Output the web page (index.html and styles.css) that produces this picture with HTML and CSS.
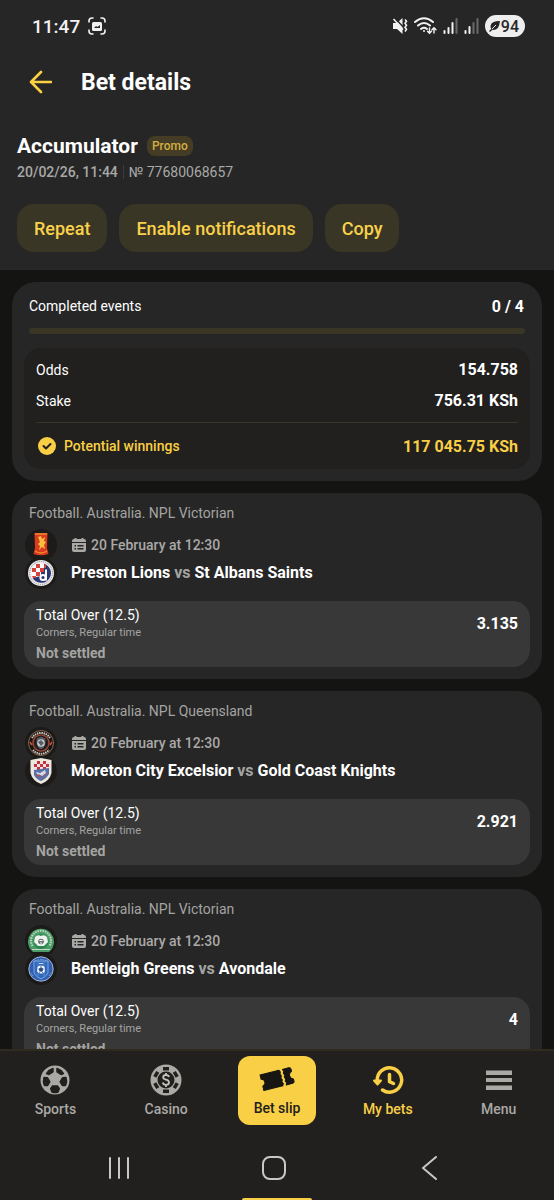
FILE: index.html
```html
<!DOCTYPE html>
<html lang="en">
<head>
<meta charset="utf-8">
<meta name="viewport" content="width=device-width, initial-scale=1">
<title>Bet details</title>
<link rel="stylesheet" href="styles.css">
</head>
<body>
<svg class="defs" aria-hidden="true">
  <symbol id="calendar" viewBox="0 0 14 14">
    <path fill="currentColor" fill-rule="evenodd" d="M2.500 0h2v1h5V0h2v1h.5q2 0 2 2v1H0V3q0-2 2-2h.5zM0 5h14v7q0 2-2 2H2q-2 0-2-2zm2.500 2v1.500H4V7zM5.500 7v1.500h6V7zm-3 3v1.500H4V10zm3 0v1.500h6V10z"/>
  </symbol>
</svg>
<div class="app">
  <header class="header">
    <div class="status">
      <div class="status-left">
        <span class="clock">11:47</span>
        <svg width="18" height="18" viewBox="0 0 18 18" fill="none" stroke="#f2f2f2" stroke-width="1.600" stroke-linecap="round"><path d="M1 5V4q0-3 3-3h1M13 1h1q3 0 3 3v1M17 13v1q0 3-3 3h-1M5 17H4q-3 0-3-3v-1"/><rect x="4" y="5" width="10" height="9" rx="1.500" fill="#f2f2f2" stroke="none"/><path d="M6 11l2-2 1.500 1L12 8v3z" fill="#262626" stroke="none"/></svg>
      </div>
      <div class="status-right">
        <svg width="16" height="18" viewBox="0 0 16 18"><path fill="#f2f2f2" d="M1 6h4l5.500-5v16L5 12H1z"/><path d="M3 1l9 10" stroke="#262626" stroke-width="1.500"/><path d="M1.500 2L11 12.500" stroke="#f2f2f2" stroke-width="1.600"/><path d="M13 2.500l1.500 1.800-1.500 2 1.500 2-1.500 2 1.500 2-1.500 2.200" fill="none" stroke="#f2f2f2" stroke-width="1.600"/></svg>
        <svg width="23" height="18" viewBox="0 0 23 18" fill="none" stroke="#f2f2f2" stroke-width="2" stroke-linecap="round"><path d="M1 5q9-7.500 18 0M4 8.500q6-5 12 0M7 12q3-2.400 6 0"/><circle cx="10" cy="14" r="1" fill="#f2f2f2" stroke="none"/><path stroke-width="1.400" d="M15.500 11v5M13.500 14.300l2 2 2-2M20 16v-5M18 12.700l2-2 2 2"/></svg>
        <svg width="15" height="16" viewBox="0 0 15 16" stroke="#f2f2f2" stroke-width="2" stroke-linecap="round"><path d="M1.500 13v2M5.500 10v5M9.500 5v10"/><path d="M13.500 1v14" stroke="#6a6a6a"/></svg>
        <svg width="15" height="16" viewBox="0 0 15 16" stroke="#f2f2f2" stroke-width="2" stroke-linecap="round"><path d="M1.500 13v2M5.500 9v6"/><path d="M9.500 5v10M13.500 1v14" stroke="#6a6a6a"/></svg>
        <span class="battery"><svg width="11" height="12" viewBox="0 0 11 12"><path d="M11 1Q2 1 1.500 6q0 2 .8 3L0 11l1 1 2.500-2.200Q10 11 11 1z" fill="#262626"/><path d="M3 9l4-4" stroke="#eee"/></svg>94</span>
      </div>
    </div>
    <div class="title-bar">
      <button class="back" aria-label="Back"><svg width="24" height="24" viewBox="0 0 24 24" fill="none" stroke="#f9d142" stroke-width="2.600" stroke-linecap="round" stroke-linejoin="round"><path d="M23 12H3M13 2L3 12l10 10"/></svg></button>
      <h1 class="title">Bet details</h1>
    </div>
    <section class="bet">
      <div class="bet-type"><h2 class="bet-name">Accumulator</h2><span class="promo">Promo</span></div>
      <div class="bet-meta"><b>20/02/26, 11:44</b><span class="bet-number">№ 77680068657</span></div>
      <div class="actions">
        <button class="action">Repeat</button>
        <button class="action">Enable notifications</button>
        <button class="action">Copy</button>
      </div>
    </section>
  </header>

  <main class="content">
    <section class="card summary">
      <div class="completed"><span>Completed events</span><b>0 / 4</b></div>
      <div class="progress"></div>
      <div class="totals">
        <div class="total"><span>Odds</span><b>154.758</b></div>
        <div class="total"><span>Stake</span><b>756.31 KSh</b></div>
        <div class="winnings">
          <span class="winnings-label"><svg width="18" height="18" viewBox="0 0 18 18"><circle cx="9" cy="9" r="9" fill="#f9cf45"/><path d="M5.500 9l2.500 2.500 4.500-4.500" fill="none" stroke="#21201e" stroke-width="2" stroke-linecap="round" stroke-linejoin="round"/></svg>Potential winnings</span>
          <b>117 045.75 KSh</b>
        </div>
      </div>
    </section>

    <article class="card event">
      <p class="league">Football. Australia. NPL Victorian</p>
      <div class="match">
        <div class="crests">
          <span class="crest"><svg width="26" height="26" viewBox="0 0 26 26"><path d="M6.500 1h13l-.5 15 1.500 6q-7.500 2.500-15 0L7 16z" fill="#d93a20"/><path d="M7 2h12M7 19q6 4 12 0" stroke="#ed8b2d" stroke-width="1.500" fill="none"/><path d="M10 5l3-1 1 3 3-2-1 4 2 1-2 3 1 4-3-2-3 3 1-4-2-2 2-2z" fill="#f8bf3c"/></svg></span>
          <span class="crest"><svg width="26" height="26" viewBox="0 0 26 26"><circle cx="13" cy="13" r="13" fill="#ece9e7"/><circle cx="13" cy="13" r="11.500" fill="none" stroke="#8a8a9c" stroke-dasharray="1 1"/><circle cx="13" cy="13" r="9.800" fill="#fff"/><path d="M16 3.700a9.800 9.800 0 1 1-11.500 14L13 16V12h3z" fill="#293773"/><path d="M8 4h4v4H8zM4 8h4v4H4zm8 0h4v4h-4zm-4 4h4v4H8zm-4 4h4v2H5zM16 4.500h2V8h-2z" fill="#d5423c"/><path d="M18 9.500v11" stroke="#fff" stroke-width="2"/><circle cx="15" cy="17.500" r="2.600" fill="none" stroke="#fff" stroke-width="2"/></svg></span>
        </div>
        <div class="match-info">
          <time class="date"><svg width="14" height="14"><use href="#calendar"/></svg>20 February at 12:30</time>
          <h3 class="teams">Preston Lions <span>vs</span> St Albans Saints</h3>
        </div>
      </div>
      <div class="pick">
        <div><p class="market">Total Over (12.5)</p><p class="scope">Corners, Regular time</p><p class="state">Not settled</p></div>
        <b class="odds">3.135</b>
      </div>
    </article>

    <article class="card event">
      <p class="league">Football. Australia. NPL Queensland</p>
      <div class="match">
        <div class="crests">
          <span class="crest"><svg width="26" height="26" viewBox="0 0 26 26"><circle cx="13" cy="13" r="12.500" fill="#171415" stroke="#866852"/><path d="M4 8a10.500 10.500 0 0 1 18 0M5 20a10.500 10.500 0 0 0 16 0" fill="none" stroke="#d0c5bb" stroke-width="2" stroke-dasharray="1.500 .7"/><circle cx="13" cy="13" r="8" fill="#28201f" stroke="#9d4937" stroke-width="1.500"/><path d="M8 8l5-2 5 2v6q-1 5-5 6-4-1-5-6z" fill="#53595c" stroke="#171415"/><circle cx="13" cy="13" r="3.800" fill="#c7cacc"/><path d="M10 12l3-2 3 3-3 3zM15 10l1 2" fill="#555c63"/><path d="M2 12l2 3M24 12l-2 3" stroke="#c75a43" stroke-width="1.500"/></svg></span>
          <span class="crest"><svg width="26" height="26" viewBox="0 0 26 26"><path d="M2.500 2L13 0l10.500 2v13q-2 8-10.500 11Q4.500 23 2.500 15z" fill="#eee8dc"/><path d="M5 4h16v11q-2 6-8 8-6-2-8-8z" fill="#e9e3e6"/><path d="M9 3h3v3H9zm6 0h3v3h-3zM6 6h3v3H6zm6 0h3v3h-3zm6 0h3v3h-3zM9 9h3v3H9zm6 0h3v3h-3z" fill="#c6323b"/><path d="M6 12l7-1 8-1v6q-3 5-8 7-5-2-7-6z" fill="#5870a8"/><path d="M8 14l4 1 5-3 1 3-4 3-5-2z" fill="#d5d5df"/><path d="M8 18l4-1 2 4M16 18l3-3" stroke="#b64e5b" fill="none"/></svg></span>
        </div>
        <div class="match-info">
          <time class="date"><svg width="14" height="14"><use href="#calendar"/></svg>20 February at 12:30</time>
          <h3 class="teams">Moreton City Excelsior <span>vs</span> Gold Coast Knights</h3>
        </div>
      </div>
      <div class="pick">
        <div><p class="market">Total Over (12.5)</p><p class="scope">Corners, Regular time</p><p class="state">Not settled</p></div>
        <b class="odds">2.921</b>
      </div>
    </article>

    <article class="card event">
      <p class="league">Football. Australia. NPL Victorian</p>
      <div class="match">
        <div class="crests">
          <span class="crest"><svg width="26" height="26" viewBox="0 0 26 26"><path d="M5 24a13 13 0 1 1 16 0z" fill="#4b9c66"/><path d="M4.500 18a10 10 0 1 1 17 0" fill="none" stroke="#bad9c2" stroke-width="2" stroke-dasharray="1.500 1"/><circle cx="13" cy="13.500" r="7.500" fill="#2d8550"/><path d="M7 9q3-3 6-1 3-2 6 1l1 5-4 4h-6l-4-4z" fill="#eef2ef"/><circle cx="13" cy="13.500" r="2.800" fill="#66726c"/><path d="M11.500 12.500h3M12 15h2" stroke="#fff"/><path d="M4 21.500h18" stroke="#c0dac7"/></svg></span>
          <span class="crest"><svg width="26" height="26" viewBox="0 0 26 26"><circle cx="13" cy="13" r="12.200" fill="#315eae" stroke="#9fb8df"/><path d="M5 6q8-5 16 0M3 17l2 3M23 17l-2 3" fill="none" stroke="#87a5d4" stroke-dasharray="1.500 1"/><path d="M6 5h14v12q-2 4-7 6-5-2-7-6z" fill="#2e68bf" stroke="#7fa5de"/><path d="M10 6v14M16 6v14" stroke="#5e8dd2"/><circle cx="13" cy="13.500" r="4" fill="#f1f4f8"/><path d="M13 11.500l2 1.500-.8 2.300h-2.400L11 13zM13 9.500v1.500M9.500 13h1M15.500 13h1M11 17l.7-1M15 17l-.7-1" fill="#294a83" stroke="#294a83" stroke-width=".7"/><path d="M11 7.500h4" stroke="#c8d8ef"/></svg></span>
        </div>
        <div class="match-info">
          <time class="date"><svg width="14" height="14"><use href="#calendar"/></svg>20 February at 12:30</time>
          <h3 class="teams">Bentleigh Greens <span>vs</span> Avondale</h3>
        </div>
      </div>
      <div class="pick">
        <div><p class="market">Total Over (12.5)</p><p class="scope">Corners, Regular time</p><p class="state">Not settled</p></div>
        <b class="odds">4</b>
      </div>
    </article>
  </main>

  <nav class="tabs">
    <a class="tab" href="#sports"><svg width="32" height="32" viewBox="0 0 32 32"><circle cx="16" cy="16" r="14.500" fill="#aaa9a6"/><g fill="#21201e" stroke="#21201e" stroke-width="1.500" stroke-linejoin="round"><path d="M14 4.500v3.300L10 10.500l-2.500-1Q9.500 6 14 4.500zM18 4.500v3.300l4 2.700 2.500-1Q22.500 6 18 4.500zM5 13.500l3.500.3 2.300 4L8.500 21.500H5.500Q3.700 17.500 5 13.500zM27 13.500l-3.500.3-2.300 4 2.300 3.700h3Q28.300 17.500 27 13.500zM13.500 22h5l1.800 2.700-1.300 3.300q-3 1-6 0l-1.300-3.300z"/></g></svg><span>Sports</span></a>
    <a class="tab" href="#casino"><svg width="32" height="32" viewBox="0 0 32 32"><circle cx="16" cy="16" r="15.500" fill="#aaa9a6"/><g fill="#21201e"><circle cx="16" cy="16" r="8.500"/><path id="notch" d="M13 3h6v3.500h-6z"/><use href="#notch" transform="rotate(60 16 16)"/><use href="#notch" transform="rotate(120 16 16)"/><use href="#notch" transform="rotate(180 16 16)"/><use href="#notch" transform="rotate(240 16 16)"/><use href="#notch" transform="rotate(300 16 16)"/></g><path d="M19 13q-.5-2-3-2-2.800 0-2.800 2.200 0 1.800 2.800 2.500 3 .7 3 2.800 0 2.300-3 2.300-2.800 0-3.200-2.300M16 9v2.500M16 20.500v2.500" fill="none" stroke="#c4c3c0" stroke-width="1.800"/></svg><span>Casino</span></a>
    <a class="tab" href="#slip"><span class="slip"><svg width="36" height="28" viewBox="0 0 36 28"><g transform="rotate(-14 18 14)" fill="#171612" stroke="#171612" stroke-linejoin="round"><path d="M2.500 6H22l1 2-1 2 1 2-1 2 1 2-1 2 1 2-1 2H2.500v-4.500q3-.5 3-3.500t-3-3.500z"/><path d="M25.500 6H32q2 0 2 2v2q-3 1-3 4t3 4v2q0 2-2 2h-6.500l1-2-1-2 1-2-1-2 1-2-1-2 1-2z"/></g></svg><span>Bet slip</span></span></a>
    <a class="tab tab-active" href="#bets" aria-current="page"><svg width="32" height="32" viewBox="0 0 32 32" fill="none" stroke="#f9cf45" stroke-width="3.500" stroke-linecap="round" stroke-linejoin="round"><path d="M5.300 17A12.200 12.200 0 1 1 10.500 26"/><path d="M2 16.500h7l-3.500 4z" fill="#f9cf45" stroke-width="2"/><path d="M17.500 10.500v7.200l4 1.800"/></svg><span>My bets</span></a>
    <a class="tab" href="#menu"><svg width="32" height="32" viewBox="0 0 32 32"><path d="M3 6.500h26v4.500H3zm0 7.500h26v4H3zm0 7.500h26V26H3z" fill="#aaa9a6"/></svg><span>Menu</span></a>
  </nav>
  <div class="system">
    <button aria-label="Recent apps"><svg width="24" height="24" viewBox="0 0 24 24" stroke="#c9c8c6" stroke-width="2" stroke-linecap="round"><path d="M3 2v20M12 2v20M21 2v20"/></svg></button>
    <button aria-label="Home"><svg width="24" height="24" viewBox="0 0 24 24"><rect x="1" y="1" width="22" height="22" rx="7" fill="none" stroke="#c9c8c6" stroke-width="2"/></svg></button>
    <button aria-label="Navigate back"><svg width="24" height="24" viewBox="0 0 24 24"><path d="M19 1L6 12l13 11" fill="none" stroke="#c9c8c6" stroke-width="2" stroke-linecap="round" stroke-linejoin="round"/></svg></button>
  </div>
</div>
</body>
</html>
```
FILE: styles.css
```css
* { box-sizing: border-box; }

body {
  margin: 0;
  background: #141412;
  color: #fff;
  font-family: Roboto, "Liberation Sans", sans-serif;
  font-size: 14px;
}

h1, h2, h3, p { margin: 0; }
svg { display: block; flex: none; }
button { border: 0; padding: 0; background: none; font: inherit; color: inherit; }
.defs { position: absolute; width: 0; height: 0; }

.app {
  display: flex;
  flex-direction: column;
  height: 100vh;
}

.header { flex: none; background: #262626; }

.status {
  display: flex;
  justify-content: space-between;
  align-items: center;
  height: 52px;
  padding: 0 29px 0 32px;
}
.status-left { display: flex; align-items: center; gap: 8px; }
.status-right { display: flex; align-items: center; gap: 6px; }
.clock { font-size: 19px; font-weight: 500; color: #f2f2f2; }
.battery {
  display: flex;
  align-items: center;
  gap: 1px;
  height: 22px;
  padding: 0 6px 0 4px;
  border-radius: 11px;
  background: #eee;
  color: #262626;
  font-size: 16px;
  font-weight: 500;
}

.title-bar {
  display: flex;
  align-items: center;
  gap: 29px;
  height: 60px;
  padding: 0 28px;
}
.title { font-size: 23px; font-weight: 700; }

.bet { padding: 22px 17px 18px; }
.bet-type { display: flex; align-items: center; gap: 9px; height: 24px; }
.bet-name { font-size: 21px; font-weight: 700; }
.promo {
  padding: 0 5px;
  border-radius: 8px;
  background: #443c24;
  color: #d3ae42;
  font-size: 12px;
  font-weight: 500;
  line-height: 20px;
}
.bet-meta {
  display: flex;
  align-items: center;
  gap: 5px;
  margin-top: 4px;
  color: #a9a9a7;
  line-height: 20px;
}
.bet-meta b { font-weight: 500; }
.bet-number { padding-left: 5px; border-left: 1px solid #3c3c3a; line-height: 14px; }
.actions { display: flex; gap: 12px; margin-top: 22px; }
.action {
  height: 48px;
  padding: 0 17px;
  border-radius: 17px;
  background: #3a3626;
  color: #f9d14a;
  font-size: 18px;
  font-weight: 500;
}

.content {
  display: flex;
  flex: 1;
  flex-direction: column;
  gap: 12px;
  min-height: 0;
  padding: 12px;
  overflow-y: auto;
  scrollbar-width: none;
}
.card { flex: none; padding: 12px; border-radius: 24px; background: #262626; }

.completed {
  display: flex;
  justify-content: space-between;
  align-items: center;
  height: 24px;
  padding: 0 6px 0 5px;
}
.summary b { font-size: 16px; }
.progress { height: 6px; margin: 10px 5px 14px; border-radius: 3px; background: #3a3626; }
.totals { padding: 6px 12px 0; border-radius: 17px; background: #21201e; }
.total { display: flex; justify-content: space-between; align-items: center; height: 31px; }
.winnings {
  display: flex;
  justify-content: space-between;
  align-items: center;
  height: 47px;
  margin-top: 6px;
  border-top: 1px solid #3a3626;
  color: #f9cf45;
}
.winnings-label { display: flex; align-items: center; gap: 8px; padding-left: 2px; font-weight: 500; }

.event { padding-top: 10px; }
.league { padding-left: 5px; color: #a4a4a2; line-height: 20px; }
.match { display: flex; gap: 14px; margin: 6px 0 12px; padding-left: 1px; }
.crest {
  display: flex;
  align-items: center;
  justify-content: center;
  width: 32px;
  height: 32px;
  border-radius: 16px;
  background: #1c1b19;
}
.crest + .crest { margin-top: -4px; }
.match-info { display: flex; flex-direction: column; justify-content: center; }
.date {
  display: flex;
  align-items: center;
  gap: 5px;
  height: 28px;
  padding-left: 1px;
  color: #aaa9a6;
  font-weight: 500;
}
.teams { font-size: 16px; font-weight: 700; line-height: 28px; }
.teams span { color: #a4a4a2; }

.pick {
  display: flex;
  justify-content: space-between;
  padding: 4px 12px;
  border-radius: 17px;
  background: #383838;
}
.market { line-height: 20px; }
.scope { color: #a4a4a2; font-size: 11px; line-height: 16px; }
.state { margin-top: 2px; color: #a4a4a2; font-weight: 700; line-height: 20px; }
.odds { font-size: 16px; line-height: 38px; }

.tabs {
  display: grid;
  flex: none;
  grid-template-columns: repeat(5, 1fr);
  height: 86px;
  border-top: 2px solid #2f2b1e;
  background: #21201e;
}
.tab {
  display: flex;
  flex-direction: column;
  align-items: center;
  gap: 3px;
  padding-top: 13px;
  color: #aaa9a6;
  font-weight: 500;
  line-height: 20px;
  text-decoration: none;
}
.tab:has(.slip) { padding-top: 5px; }
.tab-active { color: #f9cf45; }
.slip {
  display: flex;
  flex-direction: column;
  align-items: center;
  gap: 5px;
  width: 78px;
  height: 69px;
  padding-top: 9px;
  border-radius: 12px;
  background: #f9cf45;
  color: #21201e;
}

.system {
  position: relative;
  display: grid;
  flex: none;
  grid-template-columns: repeat(3, 1fr);
  height: 65px;
  padding: 0 48px 0 42px;
  background: #21201e;
}
.system button { display: grid; place-items: center; }
.system::after {
  content: "";
  position: absolute;
  bottom: 0;
  left: 50%;
  width: 70px;
  height: 2px;
  margin-left: -35px;
  border-radius: 2px 2px 0 0;
  background: #f9cf45;
}
```
